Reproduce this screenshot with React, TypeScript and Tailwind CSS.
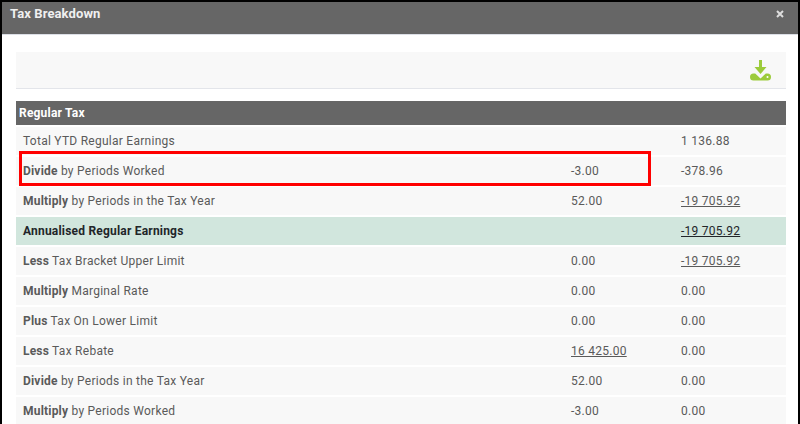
const rows = [
  { bold: "", label: "Total YTD Regular Earnings", a: "", b: "1 136.88" },
  { bold: "Divide", label: " by Periods Worked", a: "-3.00", b: "-378.96" },
  { bold: "Multiply", label: " by Periods in the Tax Year", a: "52.00", b: "-19 705.92", bLink: true },
  { bold: "Annualised Regular Earnings", label: "", a: "", b: "-19 705.92", bLink: true, total: true },
  { bold: "Less", label: " Tax Bracket Upper Limit", a: "0.00", b: "-19 705.92", bLink: true },
  { bold: "Multiply", label: " Marginal Rate", a: "0.00", b: "0.00" },
  { bold: "Plus", label: " Tax On Lower Limit", a: "0.00", b: "0.00" },
  { bold: "Less", label: " Tax Rebate", a: "16 425.00", aLink: true, b: "0.00" },
  { bold: "Divide", label: " by Periods in the Tax Year", a: "52.00", b: "0.00" },
  { bold: "Multiply", label: " by Periods Worked", a: "-3.00", b: "0.00" },
];

export default function App() {
  return (
    <div className="h-[424px] w-[800px] overflow-hidden bg-black px-[2px] pt-[2px] font-['Roboto',sans-serif] text-[12px] tracking-[0.26px] text-[#5a5a5a]">
      <div className="relative h-[422px] overflow-hidden bg-white">
        {/* Modal header */}
        <div className="flex h-[33px] items-start justify-between border-b border-[#dcdfe6] bg-[#666] pl-[8px] pr-[14px] pt-[4px]">
          <span className="text-[13px] font-bold leading-[16px] tracking-[0.1px] text-[#f0f0f0]">Tax Breakdown</span>
          <svg className="mt-[4px]" width="8" height="8" viewBox="0 0 8 8">
            <path d="M1 1l6 6M7 1l-6 6" stroke="#dddddd" strokeWidth="2" fill="none" />
          </svg>
        </div>

        <div className="pl-[14px] pr-[12px] pt-[17px]">
          {/* Toolbar */}
          <div className="flex h-[37px] items-center justify-end border-b border-[#e3e5ea] bg-[#f8f8f8] pr-[15px]">
            <svg width="21" height="21" viewBox="0 0 21 21">
              <path d="M9 0h3v7h4.5l-6 7-6-7H9z" fill="#9ccb3b" />
              <path d="M3.5 13.5h1.7l5.3 5 5.3-5h1.7q3.5 0 3.5 3.5t-3.5 3.5h-14Q0 20.5 0 17t3.5-3.5z" fill="#9ccb3b" />
              <circle cx="17.5" cy="17" r="1" fill="#fff" />
            </svg>
          </div>

          {/* Section title */}
          <div className="mt-[12px] flex h-[24px] items-center bg-[#666] pl-[3px] font-bold tracking-[0.2px] text-white">Regular Tax</div>

          <div className="mt-[2px] flex flex-col gap-[2px]">
            {rows.map((row, i) => (
              <div
                key={i}
                className={`flex h-[28px] shrink-0 items-center pl-[7px] ${row.total ? "bg-[#d1e6dd] text-[#212529]" : "bg-[#f8f8f8]"}`}
              >
                <div className="w-[548px] whitespace-pre">
                  <span className="font-bold tracking-[0.2px]">{row.bold}</span>
                  {row.label}
                </div>
                <div className={`w-[110px] ${row.aLink ? "underline" : ""}`}>{row.a}</div>
                <div className={row.bLink ? "underline" : ""}>{row.b}</div>
              </div>
            ))}
          </div>
        </div>

        {/* Red highlight */}
        <div className="absolute left-[17px] top-[149px] h-[35px] w-[632px] border-[3px] border-[#f00]" />
      </div>
    </div>
  );
}
